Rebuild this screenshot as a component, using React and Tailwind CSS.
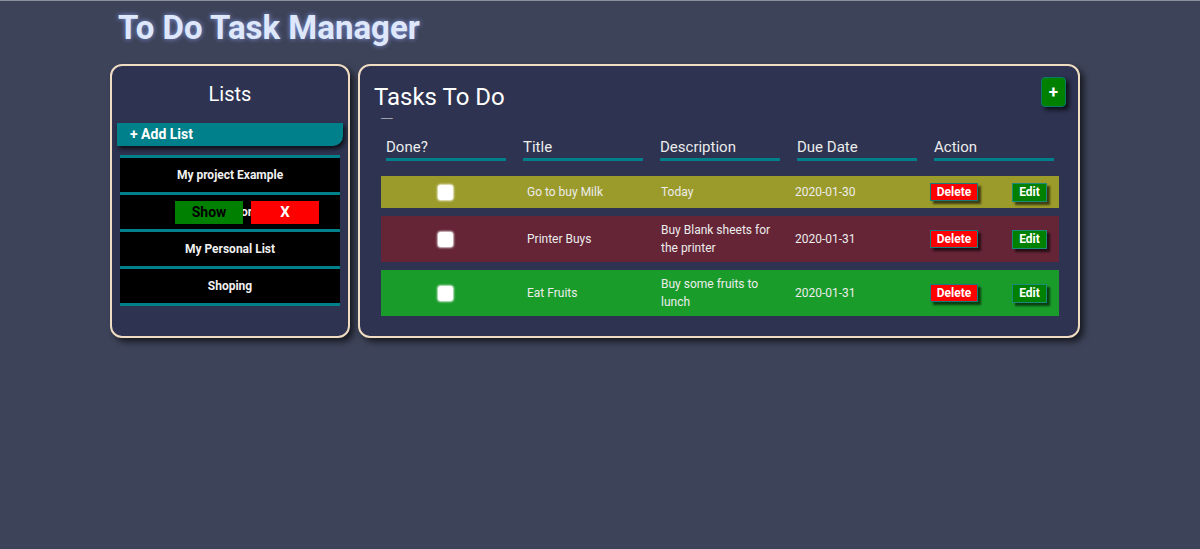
import React from 'react';

const FONT = { fontFamily: 'Roboto, "Liberation Sans", sans-serif' };

const lists = ['My project Example', null, 'My Personal List', 'Shoping'];

const tasks = [
  { title: 'Go to buy Milk', desc: 'Today', due: '2020-01-30', bg: 'bg-[#9b9b2b]', h: 'h-[32px]' },
  { title: 'Printer Buys', desc: 'Buy Blank sheets for the printer', due: '2020-01-31', bg: 'bg-[#652537]', h: 'h-[46px]' },
  { title: 'Eat Fruits', desc: 'Buy some fruits to lunch', due: '2020-01-31', bg: 'bg-[#1a9c2b]', h: 'h-[46px]' },
];

const headers = ['Done?', 'Title', 'Description', 'Due Date', 'Action'];

function ListsPanel() {
  return (
    <div className="w-[240px] h-[274px] shrink-0 rounded-[12px] border-2 border-[#efdcc2] bg-[#2d3350] shadow-[4px_4px_6px_rgba(0,0,0,0.6)] flex flex-col">
      <h2 className="text-center text-[20px] leading-[24px] text-white mt-[16px]">Lists</h2>
      {/* Add list bar */}
      <div className="mx-[5px] mt-[17px] h-[23px] bg-[#00808a] rounded-br-[10px] shadow-[2px_3px_4px_rgba(0,0,0,0.7)] flex items-center pl-[13px] text-[14px] font-bold text-white">
        + Add List
      </div>
      <div className="mx-[8px] mt-[9px] border-t-[3px] border-[#00808a]">
        {lists.map((name, i) => (
          <div key={i} className="h-[37px] bg-black border-b-[3px] border-[#00808a] flex items-center justify-center text-[12px] font-bold text-[#f0f0f0]">
            {name ? (
              name
            ) : (
              <div className="flex items-center ml-[34px]">
                <button className="relative z-10 w-[68px] h-[23px] bg-[#008000] text-black text-[14px]">Show</button>
                <span className="ml-[-2px] w-[10px] overflow-hidden">or</span>
                <button className="relative z-10 w-[68px] h-[23px] bg-[#ff0000] text-white text-[15px] font-bold">X</button>
              </div>
            )}
          </div>
        ))}
      </div>
    </div>
  );
}

function TasksPanel() {
  return (
    <div className="w-[722px] h-[274px] shrink-0 rounded-[12px] border-2 border-[#efdcc2] bg-[#2d3350] shadow-[4px_4px_6px_rgba(0,0,0,0.6)] pl-[21px] pr-[19px]">
      <div className="flex justify-between items-start">
        <div>
          <h2 className="text-[24px] leading-[28px] text-white mt-[17px] ml-[-7px]">Tasks To Do</h2>
          <div className="text-[7px] leading-[10px] text-white mt-[3px]">------</div>
        </div>
        <button className="mt-[11px] mr-[-7px] w-[25px] h-[30px] rounded-[4px] bg-[#008000] border border-[#0a7a6a] text-white font-bold text-[17px] leading-none shadow-[3px_3px_4px_rgba(0,0,0,0.7)]">
          +
        </button>
      </div>

      {/* Header */}
      <div className="grid grid-cols-[137px_137px_137px_137px_137px] ml-[5px] mt-[13px]">
        {headers.map((h) => (
          <div key={h} className="w-[120px] border-b-[3px] border-[#00808a] text-[15px] leading-[20px] text-[#ececec] pb-[1px]">
            {h}
          </div>
        ))}
      </div>

      {/* Rows */}
      <div className="mt-[15px] flex flex-col gap-[8px] w-[678px]">
        {tasks.map((t) => (
          <div key={t.title} className={`${t.bg} ${t.h} grid grid-cols-[128px_152px_134px_135px_129px] items-center text-[12px] leading-[18px] text-[#ececec]`}>
            <div className="flex justify-center">
              <div className="w-[15px] h-[15px] rounded-[3px] bg-white shadow-[0_0_2px_1px_rgba(255,255,255,0.8)]" />
            </div>
            <div className="pl-[18px]">{t.title}</div>
            <div className="pr-[20px]">{t.desc}</div>
            <div>{t.due}</div>
            <div className="flex items-center">
              <button className="w-[48px] h-[18px] bg-[#ff0000] text-white font-bold text-[12px] leading-none border border-[#1a7a7a] shadow-[3px_3px_2px_rgba(0,0,0,0.6)]">
                Delete
              </button>
              <button className="ml-[34px] w-[35px] h-[19px] bg-[#008000] text-white font-bold text-[12px] leading-none border border-[#1a8a7a] shadow-[3px_3px_2px_rgba(0,0,0,0.6)]">
                Edit
              </button>
            </div>
          </div>
        ))}
      </div>
    </div>
  );
}

export default function App() {
  return (
    <div className="w-[1200px] h-[549px] bg-[#3d4359] border-t border-[#8a8f9a] pl-[110px]" style={FONT}>
      <h1 className="text-[33px] leading-[38px] font-bold text-[#dfe8fb] pl-[8px] pt-[8px] [text-shadow:0_0_5px_rgba(150,170,255,0.8)]">
        To Do Task Manager
      </h1>
      <div className="flex gap-[8px] mt-[17px]">
        <ListsPanel />
        <TasksPanel />
      </div>
    </div>
  );
}
